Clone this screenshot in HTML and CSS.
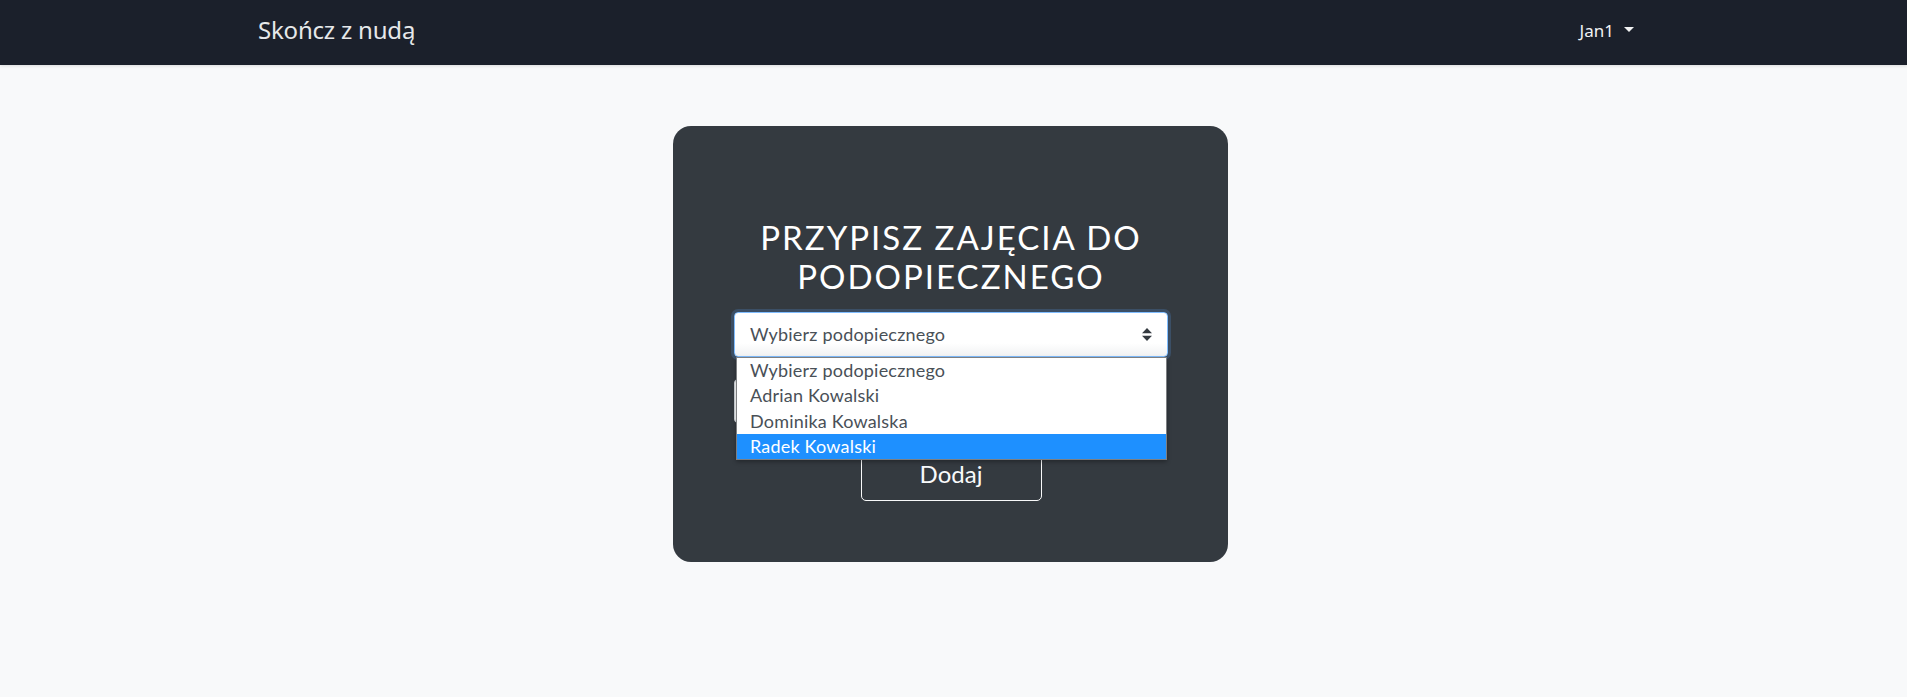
FILE: index.html
```html
<!DOCTYPE html>
<html lang="pl">
<head>
<meta charset="utf-8">
<title>Skończ z nudą</title>
<link rel="stylesheet" href="styles.css">
</head>
<body>
<header class="navbar">
  <div class="nav-inner">
    <a class="brand" href="#">Skończ z nudą</a>
    <a class="user" href="#">Jan1<span class="caret"></span></a>
  </div>
</header>
<main class="page">
  <section class="card">
    <h2 class="title">PRZYPISZ ZAJĘCIA DO PODOPIECZNEGO</h2>
    <div class="select-wrap">
      <div class="select">
        <span>Wybierz podopiecznego</span>
        <svg class="arrows" viewBox="0 0 4 5" width="10" height="13" preserveAspectRatio="none"><path d="M2 0L0 2h4zm0 5L0 3h4z" fill="#343a40"/></svg>
      </div>
      <ul class="options">
        <li>Wybierz podopiecznego</li>
        <li>Adrian Kowalski</li>
        <li>Dominika Kowalska</li>
        <li class="active">Radek Kowalski</li>
      </ul>
    </div>
    <div class="field"></div>
    <button class="btn" type="button">Dodaj</button>
  </section>
</main>
</body>
</html>
```

FILE: styles.css
```css
* { box-sizing: border-box; }
html, body { margin: 0; padding: 0; }
body {
  background: #f8f9fa;
  font-family: "Lato", "Noto Sans", sans-serif;
  height: 697px;
  overflow: hidden;
}
.navbar {
  background: #1b202b;
  height: 65px;
  box-shadow: 0 1px 3px rgba(0,0,0,0.12);
  position: relative;
  z-index: 1;
}
.nav-inner {
  height: 100%;
  display: flex;
  align-items: center;
  justify-content: space-between;
  padding: 0 273px 7px 258px;
}
.brand {
  font-family: "Noto Sans", "Open Sans", sans-serif;
  font-size: 24px;
  color: #e6e8ea;
  text-decoration: none;
  letter-spacing: -0.2px;
}
.user {
  font-family: "Noto Sans", "Open Sans", sans-serif;
  font-size: 17px;
  color: #f2f3f4;
  text-decoration: none;
  display: flex;
  align-items: center;
  padding-top: 3px;
}
.caret {
  display: inline-block;
  margin-left: 10px;
  border-top: 5px solid #f2f3f4;
  border-left: 5px solid transparent;
  border-right: 5px solid transparent;
  margin-bottom: 2px;
}
.page {
  padding: 61px 6px 0 0;
}
.card {
  width: 555px;
  height: 436px;
  margin: 0 auto;
  background: #343a40;
  border-radius: 18px;
  padding: 92px 60px 0 61px;
  display: flex;
  flex-direction: column;
  align-items: stretch;
}
.title {
  margin: 0 -20px;
  color: #fff;
  font-weight: 400;
  font-size: 33px;
  letter-spacing: 2px;
  line-height: 39px;
  text-align: center;
}
.select-wrap {
  position: relative;
  margin-top: 16px;
}
.select {
  height: 45px;
  background: linear-gradient(#fff 70%, #f1f2f3);
  border: 1px solid #80bdff;
  border-radius: 4px;
  box-shadow: 0 0 0 3px #3b4f66;
  display: flex;
  align-items: center;
  justify-content: space-between;
  padding: 0 15px 1px 15px;
  color: #495057;
  font-size: 18px;
  letter-spacing: 0.2px;
}
.arrows { display: block; }
.options {
  position: absolute;
  top: 100%;
  left: 2px;
  right: 1px;
  margin: 0;
  padding: 0;
  list-style: none;
  background: #fff;
  border: 1px solid #7d7f82;
  box-shadow: 0 2px 4px rgba(0,0,0,0.3);
  z-index: 2;
}
.options li {
  height: 25.3px;
  line-height: 25px;
  padding-left: 13px;
  font-size: 18px;
  letter-spacing: 0.2px;
  color: #495057;
}
.options li.active {
  background: #1e90ff;
  color: #fff;
}
.field {
  margin: 22px 3px 0 0;
  height: 44px;
  background: #fff;
  border: 1px solid #ced4da;
  border-radius: 4px;
}
.btn {
  align-self: center;
  margin-top: 24px;
  width: 181px;
  height: 54px;
  background: transparent;
  border: 1px solid #f8f9fa;
  border-radius: 5px;
  color: #f8f9fa;
  font-family: "Lato", "Noto Sans", sans-serif;
  font-size: 24px;
  padding: 0 0 2px;
}
```
